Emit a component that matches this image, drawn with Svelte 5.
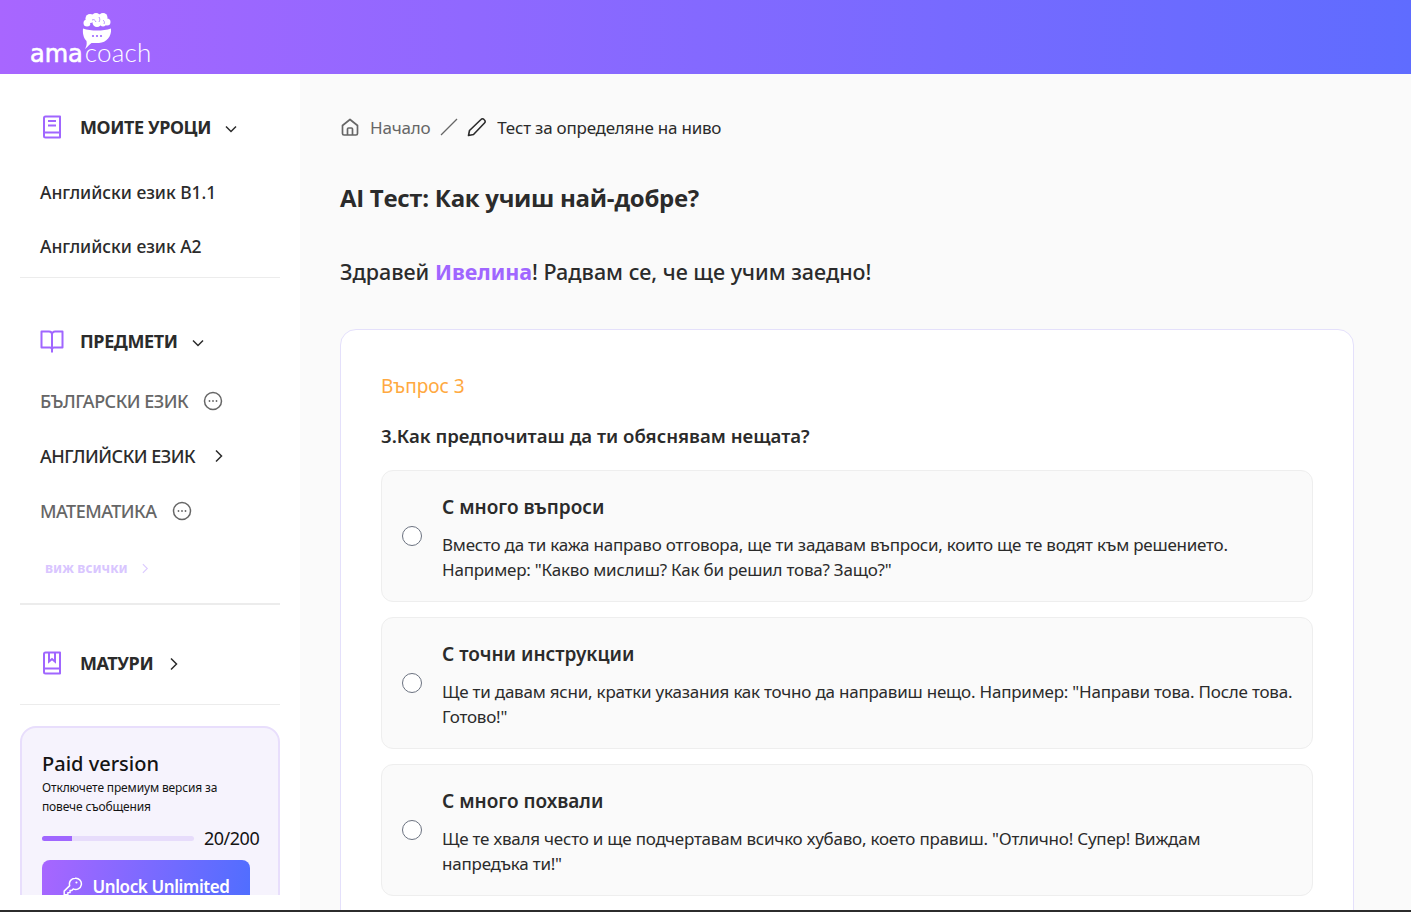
<script>
    const subjects = [
        { name: 'БЪЛГАРСКИ ЕЗИК', locked: true },
        { name: 'АНГЛИЙСКИ ЕЗИК', locked: false },
        { name: 'МАТЕМАТИКА', locked: true }
    ];

    const options = [
        {
            title: 'С много въпроси',
            text: 'Вместо да ти кажа направо отговора, ще ти задавам въпроси, които ще те водят към решението. Например: "Какво мислиш? Как би решил това? Защо?"'
        },
        {
            title: 'С точни инструкции',
            text: 'Ще ти давам ясни, кратки указания как точно да направиш нещо. Например: "Направи това. После това. Готово!"'
        },
        {
            title: 'С много похвали',
            text: 'Ще те хваля често и ще подчертавам всичко хубаво, което правиш. "Отлично! Супер! Виждам\nнапредъка ти!"'
        }
    ];

    let selected = null;
    let used = 20;
    let limit = 200;
    let progress = 20; // bar is drawn at 20% in the design
</script>

<div class="page">
    <header class="topbar">
        <div class="logo">
            <svg class="logo-mark" viewBox="0 0 30 38" width="30" height="38" aria-hidden="true">
                <g fill="#fff">
                    <circle cx="8" cy="5.500" r="4.500"/>
                    <circle cx="14" cy="4.500" r="4.500"/>
                    <circle cx="21" cy="4.500" r="4.500"/>
                    <circle cx="25" cy="9" r="3.500"/>
                    <circle cx="5" cy="10" r="3.500"/>
                    <circle cx="15" cy="9.500" r="4.500"/>
                    <circle cx="21" cy="10.500" r="3"/>
                </g>
                <path fill="none" stroke="#9a66ff" stroke-width="0.700" d="M10 7c2-1 3 0 4 2M17 4c1 2 1 3 0 5M21 7c1 1 2 2 1 4M8 10c1 1 2 2 1 3"/>
                <path fill="#fff" d="M1 15.500c4 1.500 9 2 14 2s10-.500 14-2c.800 8-4.500 14-12 14.500H9.500C7.500 31.500 5.500 34 3 36c1.500-2.500 2-5 1.500-8C1.500 25 .500 20 1 15.500z"/>
                <circle cx="11" cy="23" r="1.100" fill="#9a66ff"/>
                <circle cx="15" cy="23" r="1.100" fill="#9a66ff"/>
                <circle cx="19" cy="23" r="1.100" fill="#9a66ff"/>
            </svg>
            <div class="logo-text"><span class="ama">ama</span><span class="coach">coach</span></div>
        </div>
    </header>

    <div class="layout">
        <aside class="sidebar">
            <div class="nav-head first">
                <svg class="nav-icon" viewBox="0 0 20 24" width="20" height="24" aria-hidden="true">
                    <path fill="none" stroke="#a066ff" stroke-width="2" stroke-linejoin="round" d="M2 19V3a1.500 1.500 0 0 1 1.500-1.500H18v21H3.500A1.500 1.500 0 0 1 2 21z"/>
                    <path fill="none" stroke="#a066ff" stroke-width="2" d="M2 17.500h16M6 6h8M6 10.500h8"/>
                </svg>
                <span>МОИТЕ УРОЦИ</span>
                <svg class="chev" viewBox="0 0 12 8" width="12" height="8" aria-hidden="true"><path d="M1 1.500l5 5 5-5" fill="none" stroke="#2b2b2b" stroke-width="1.500"/></svg>
            </div>
            <a class="lesson" href="#b1">Английски език B1.1</a>
            <a class="lesson" href="#a2">Английски език A2</a>
            <hr class="line after-lessons" />

            <div class="nav-head subjects">
                <svg class="nav-icon wide" viewBox="0 0 24 23" width="24" height="23" aria-hidden="true">
                    <path fill="none" stroke="#a066ff" stroke-width="2" stroke-linejoin="round" d="M1.500 1.500H9a3 3 0 0 1 3 3v15a2 2 0 0 0-2-2H1.500zM22.500 1.500H15a3 3 0 0 0-3 3v15a2 2 0 0 1 2-2h8.500zM12 19v3.500"/>
                </svg>
                <span>ПРЕДМЕТИ</span>
                <svg class="chev" viewBox="0 0 12 8" width="12" height="8" aria-hidden="true"><path d="M1 1.500l5 5 5-5" fill="none" stroke="#2b2b2b" stroke-width="1.500"/></svg>
            </div>

            <ul class="subject-list">
                {#each subjects as subject}
                    <li class:locked={subject.locked}>
                        <span>{subject.name}</span>
                        {#if subject.locked}
                            <svg viewBox="0 0 20 20" width="20" height="20" aria-hidden="true">
                                <circle cx="10" cy="10" r="8.500" fill="none" stroke="#666" stroke-width="1.500"/>
                                <circle cx="6.500" cy="10" r="0.900" fill="#666"/>
                                <circle cx="10" cy="10" r="0.900" fill="#666"/>
                                <circle cx="13.500" cy="10" r="0.900" fill="#666"/>
                            </svg>
                        {:else}
                            <svg class="arrow" viewBox="0 0 8 14" width="8" height="14" aria-hidden="true"><path d="M1 1.500l5.500 5.500-5.500 5.500" fill="none" stroke="#2b2b2b" stroke-width="1.500"/></svg>
                        {/if}
                    </li>
                {/each}
            </ul>

            <a class="see-all" href="#all">
                виж всички
                <svg viewBox="0 0 8 12" width="7" height="11" aria-hidden="true"><path d="M1 1l5 5-5 5" fill="none" stroke="#dccbff" stroke-width="1.300"/></svg>
            </a>
            <hr class="line thick" />

            <div class="nav-head exams">
                <svg class="nav-icon" viewBox="0 0 20 24" width="20" height="24" aria-hidden="true">
                    <path fill="none" stroke="#a066ff" stroke-width="2" stroke-linejoin="round" d="M2 19V3a1.500 1.500 0 0 1 1.500-1.500H18v21H3.500A1.500 1.500 0 0 1 2 21z"/>
                    <path fill="none" stroke="#a066ff" stroke-width="2" d="M2 17.500h16M7 2v8.500l3-2.500 3 2.500V2"/>
                </svg>
                <span>МАТУРИ</span>
                <svg class="chev-right" viewBox="0 0 8 14" width="8" height="14" aria-hidden="true"><path d="M1 1.500l5.500 5.500-5.500 5.500" fill="none" stroke="#2b2b2b" stroke-width="1.500"/></svg>
            </div>
            <hr class="line after-exams" />

            <div class="paid">
                <h3>Paid version</h3>
                <p>Отключете премиум версия за повече съобщения</p>
                <div class="usage">
                    <div class="track"><div class="fill" style="width: {progress}%"></div></div>
                    <span>{used}/{limit}</span>
                </div>
                <button type="button" class="unlock">
                    <svg viewBox="0 0 24 24" width="21" height="21" aria-hidden="true">
                        <path fill="none" stroke="#fff" stroke-width="1.700" stroke-linejoin="round" d="M15 2.500a6.500 6.500 0 0 0-6.200 8.500L2.500 17.300V21.500h4.200v-2.500h2.500v-2.500h2l1.600-1.700A6.500 6.500 0 1 0 15 2.500z"/>
                        <circle cx="16.500" cy="7.500" r="1.200" fill="#fff"/>
                    </svg>
                    Unlock Unlimited
                </button>
            </div>
        </aside>

        <main class="content">
            <nav class="crumbs">
                <svg viewBox="0 0 20 20" width="20" height="20" aria-hidden="true">
                    <path fill="none" stroke="#666" stroke-width="1.700" stroke-linejoin="round" d="M2.500 8.500L10 2.500l7.500 6V16.500a1.500 1.500 0 0 1-1.500 1.500H4a1.500 1.500 0 0 1-1.500-1.500z"/>
                    <path fill="none" stroke="#666" stroke-width="1.700" d="M7.500 18v-6a1 1 0 0 1 1-1h3a1 1 0 0 1 1 1v6"/>
                </svg>
                <span class="home">Начало</span>
                <svg class="slash" viewBox="0 0 18 18" width="18" height="18" aria-hidden="true"><path d="M1 17L17 1" stroke="#666" stroke-width="1.200"/></svg>
                <svg viewBox="0 0 20 20" width="20" height="20" aria-hidden="true">
                    <path fill="none" stroke="#2b2b2b" stroke-width="1.600" stroke-linejoin="round" d="M1.500 18.500l1-5L14 2.500a2 2 0 0 1 3 0l.5.500a2 2 0 0 1 0 3L6.500 17.500z"/>
                </svg>
                <span class="current">Тест за определяне на ниво</span>
            </nav>

            <h1>AI Тест: Как учиш най-добре?</h1>
            <h2>Здравей <strong>Ивелина</strong>! Радвам се, че ще учим заедно!</h2>

            <section class="quiz">
                <div class="q-num">Въпрос 3</div>
                <div class="q-text">3.Как предпочиташ да ти обяснявам нещата?</div>
                <div class="options">
                    {#each options as option, i}
                        <label class="option">
                            <input type="radio" name="answer" value={i} bind:group={selected} />
                            <div class="opt-body">
                                <div class="opt-title">{option.title}</div>
                                <div class="opt-text">{option.text}</div>
                            </div>
                        </label>
                    {/each}
                </div>
            </section>
        </main>
    </div>
    <div class="edge"></div>
</div>

<style>
    :global(body) {
        margin: 0;
        font-family: "Noto Sans", "Open Sans", sans-serif;
        color: #2b2b2b;
    }

    .page {
        height: 912px;
        display: flex;
        flex-direction: column;
        overflow: hidden;
    }

    .topbar {
        height: 74px;
        flex: none;
        background: linear-gradient(90deg, #a866ff 0%, #5f6cff 100%);
        padding-left: 30px;
    }

    .logo {
        width: 122px;
        display: flex;
        flex-direction: column;
        align-items: center;
        padding-top: 13px;
        position: relative;
    }

    .logo-mark {
        margin-left: 11px;
        display: block;
    }

    .logo-text {
        position: absolute;
        top: 37px;
        left: 0;
        color: #fff;
        white-space: nowrap;
        line-height: 30px;
    }

    .ama {
        font-family: "DejaVu Sans", sans-serif;
        font-size: 24px;
        -webkit-text-stroke: 0.6px #fff;
    }

    .coach {
        font-family: "Lato", sans-serif;
        font-size: 26px;
        font-weight: 300;
        margin-left: 2px;
        letter-spacing: 0.2px;
    }

    .layout {
        flex: 1;
        min-height: 0;
        display: flex;
    }

    .sidebar {
        width: 300px;
        flex: none;
        box-sizing: border-box;
        padding: 0 20px;
        background: #fff;
        height: 821px;
        overflow: hidden;
    }

    .nav-head {
        display: flex;
        align-items: center;
        height: 30px;
        padding-left: 22px;
        font-size: 18px;
        font-weight: 700;
        letter-spacing: -0.4px;
    }

    .nav-head span {
        margin-left: 18px;
    }

    .nav-head .chev {
        margin-left: 14px;
        margin-top: 3px;
    }

    .nav-head .chev-right {
        margin-left: 17px;
        margin-top: 2px;
    }

    .nav-head.first {
        margin-top: 38px;
    }

    .nav-head.subjects {
        margin-top: 48px;
        padding-left: 20px;
    }

    .nav-head.subjects span {
        margin-left: 16px;
    }

    .nav-head.exams {
        margin-top: 43px;
    }

    .lesson {
        display: block;
        margin-left: 20px;
        color: #2b2b2b;
        font-size: 17.500px;
        font-weight: 500;
        line-height: 24px;
        letter-spacing: -0.03px;
        text-decoration: none;
    }

    .nav-head + .lesson {
        margin-top: 38px;
    }

    .lesson + .lesson {
        margin-top: 30px;
    }

    .line {
        border: 0;
        height: 1px;
        margin: 0;
        background: #ececec;
    }

    .after-lessons {
        margin-top: 19px;
    }

    .thick {
        height: 2px;
        margin-top: 25px;
    }

    .after-exams {
        margin-top: 26px;
    }

    .subject-list {
        list-style: none;
        margin: 30px 0 0;
        padding: 0;
    }

    .subject-list li {
        display: flex;
        align-items: center;
        gap: 15px;
        height: 30px;
        margin: 0 0 25px 20px;
        font-size: 18px;
        font-weight: 500;
        letter-spacing: -0.5px;
        color: #2b2b2b;
    }

    .subject-list li.locked {
        color: #666;
    }

    .subject-list .arrow {
        margin-left: 5px;
    }

    .see-all {
        display: flex;
        align-items: center;
        gap: 14px;
        margin: 32px 0 0 25px;
        height: 20px;
        color: #d9c6ff;
        font-size: 13.500px;
        font-weight: 700;
        text-decoration: none;
    }

    .paid {
        margin-top: 21px;
        box-sizing: border-box;
        height: 240px;
        border: 2px solid #e8defc;
        border-radius: 16px;
        background: #f6f3fd;
        padding: 21px 20px;
        color: #141414;
    }

    .paid h3 {
        margin: 0;
        font-size: 20px;
        font-weight: 500;
        line-height: 30px;
    }

    .paid p {
        margin: -1px 0 0;
        font-size: 12px;
        line-height: 19px;
        letter-spacing: -0.15px;
        width: 190px;
    }

    .usage {
        display: flex;
        align-items: center;
        gap: 10px;
        margin-top: 8px;
        height: 28px;
        font-size: 18px;
        letter-spacing: -0.5px;
    }

    .track {
        flex: none;
        width: 152px;
        height: 5px;
        border-radius: 3px;
        background: #e7dcfb;
        overflow: hidden;
    }

    .fill {
        height: 100%;
        background: #a066ff;
    }

    .unlock {
        display: flex;
        align-items: center;
        justify-content: center;
        gap: 9px;
        width: 208px;
        height: 52px;
        margin-top: 8px;
        border: 0;
        border-radius: 8px;
        background: linear-gradient(100deg, #a866ff 0%, #4f6eff 100%);
        color: #fff;
        font-family: inherit;
        font-size: 17px;
        font-weight: 600;
        letter-spacing: -0.4px;
    }

    .content {
        flex: 1;
        min-width: 0;
        background: #fafafa;
        padding: 0 57px 0 40px;
        overflow: hidden;
    }

    .crumbs {
        display: flex;
        align-items: center;
        height: 30px;
        margin-top: 38px;
        font-size: 17px;
        letter-spacing: -0.22px;
    }

    .home {
        margin-left: 10px;
        color: #666;
    }

    .slash {
        margin: 0 9px 0 10px;
    }

    .current {
        margin-left: 10px;
    }

    h1 {
        margin: 39px 0 0;
        font-family: "Open Sans", "Noto Sans", sans-serif;
        font-size: 24px;
        line-height: 34px;
        font-weight: 700;
        letter-spacing: -0.3px;
    }

    h2 {
        margin: 40px 0 0;
        font-size: 21.500px;
        line-height: 34px;
        font-weight: 500;
    }

    h2 strong {
        color: #a066ff;
        font-weight: 700;
    }

    .quiz {
        margin-top: 40px;
        box-sizing: border-box;
        height: 700px;
        border: 1px solid #e4e0fb;
        border-radius: 16px;
        background: #fff;
        padding: 40px;
    }

    .q-num {
        color: #ffa940;
        font-size: 19px;
        line-height: 32px;
    }

    .q-text {
        margin-top: 18px;
        font-size: 18.600px;
        font-weight: 600;
        line-height: 32px;
    }

    .options {
        display: flex;
        flex-direction: column;
        gap: 15px;
        margin-top: 18px;
    }

    .option {
        display: flex;
        align-items: center;
        box-sizing: border-box;
        height: 132px;
        padding: 0 10px 0 20px;
        border: 1px solid #eee;
        border-radius: 12px;
        background: #fafafa;
    }

    .option input {
        appearance: none;
        flex: none;
        width: 20px;
        height: 20px;
        margin: 0 20px 0 0;
        border: 1px solid #6b7280;
        border-radius: 50%;
        background: #fff;
    }

    .opt-body {
        padding-top: 2px;
    }

    .opt-title {
        font-size: 19px;
        font-weight: 600;
        line-height: 28px;
    }

    .opt-text {
        margin-top: 11px;
        font-size: 17px;
        line-height: 25px;
        letter-spacing: -0.22px;
        white-space: pre-line;
    }

    .edge {
        height: 2px;
        flex: none;
        background: #2c2c2c;
        margin-top: -2px;
        position: relative;
    }
</style>
